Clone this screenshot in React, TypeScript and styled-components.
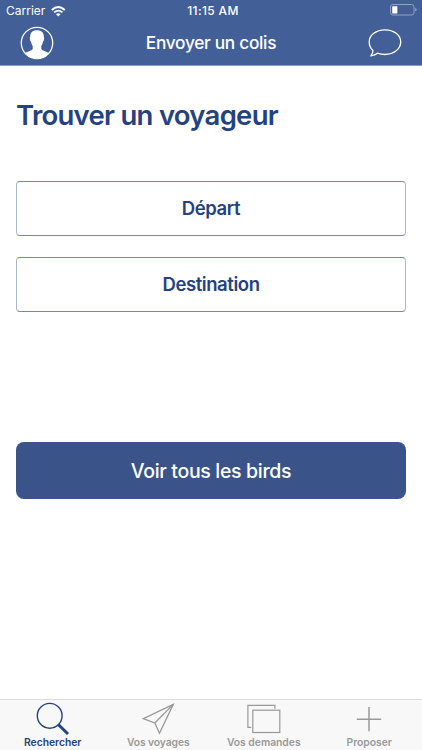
import React from "react";
import styled, { createGlobalStyle } from "styled-components";

const GlobalStyle = createGlobalStyle`
  * { box-sizing: border-box; }
  body { margin: 0; background: #fff; font-family: Inter, "Liberation Sans", sans-serif; }
  button { font: inherit; cursor: pointer; padding: 0; margin: 0; }
  svg { display: block; flex: none; }
`;

const Screen = styled.div`
  width: 422px;
  height: 750px;
  display: flex;
  flex-direction: column;
  background: #fff;
`;

const Header = styled.header`
  height: 66px;
  flex: none;
  background: #425f97;
  border-bottom: 1px solid #8b9ab9;
  color: #fff;
`;

const StatusBar = styled.div`
  height: 22px;
  display: grid;
  grid-template-columns: 1fr auto 1fr;
  align-items: center;
  padding: 0 5px 0 6px;
`;

const Carrier = styled.div`
  display: flex;
  align-items: center;
  gap: 6px;
  font-size: 12px;
  line-height: 22px;
`;

const Clock = styled.div`
  font-size: 12px;
  line-height: 21px;
  padding-bottom: 1px;
  font-weight: 500;
  letter-spacing: 0.35px;
  padding-left: 3px;
`;

const BatterySlot = styled.div`
  justify-self: end;
  padding-bottom: 2px;
`;

const NavBar = styled.div`
  height: 42px;
  display: grid;
  grid-template-columns: 1fr auto 1fr;
  align-items: center;
  padding: 0 20px;
`;

const IconButton = styled.button<{ $end?: boolean }>`
  border: 0;
  background: none;
  color: inherit;
  justify-self: ${(p) => (p.$end ? "end" : "start")};
`;

const NavTitle = styled.h1`
  margin: 0;
  font-size: 17.3px;
  line-height: 42px;
  font-weight: 500;
  letter-spacing: -0.3px;
`;

const Main = styled.main`
  flex: 1;
  display: flex;
  flex-direction: column;
  padding: 32px 16px 0;
`;

const Heading = styled.h2`
  margin: 0 0 49px;
  color: #24427f;
  font-size: 27.5px;
  line-height: 34px;
  font-weight: 600;
  letter-spacing: -0.72px;
  white-space: nowrap;
`;

const Fields = styled.div`
  display: flex;
  flex-direction: column;
  gap: 21px;
`;

const FieldButton = styled.button`
  height: 55px;
  padding-bottom: 2px;
  border: 1px solid #7488b3;
  border-left-color: #a9b7d2;
  border-right-color: #a9b7d2;
  border-radius: 4px;
  background: #fff;
  color: #24427f;
  font-size: 18.5px;
  font-weight: 600;
  letter-spacing: -0.42px;
`;

const PrimaryButton = styled.button`
  margin-top: 130px;
  height: 57px;
  border: 0;
  border-radius: 8px;
  background: #3a548a;
  color: #fff;
  font-size: 19.5px;
  font-weight: 500;
  letter-spacing: -0.33px;
`;

const TabBar = styled.nav`
  height: 51px;
  flex: none;
  display: grid;
  grid-template-columns: repeat(4, 1fr);
  border-top: 1px solid #dcdcde;
  background: #f8f8f8;
`;

const Tab = styled.button<{ $active?: boolean }>`
  border: 0;
  background: none;
  display: flex;
  flex-direction: column;
  align-items: center;
  color: ${(p) => (p.$active ? "#24427f" : "#999")};
`;

const TabLabel = styled.span<{ $spacing?: number }>`
  font-size: 10.3px;
  line-height: 11px;
  font-weight: 600;
  letter-spacing: ${(p) => p.$spacing ?? 0}px;
  white-space: nowrap;
`;

const WifiIcon = () => (
  <svg width="15" height="11" viewBox="0 0 15 11" fill="none" stroke="currentColor">
    <path d="M.8 4Q7.3-1.8 13.8 4" strokeWidth="1.9" />
    <path d="M3.1 6.4Q7.3 2.8 11.5 6.4" strokeWidth="1.8" />
    <path d="M5 8.2Q7.3 6.3 9.6 8.2L7.3 10.5Z" fill="currentColor" stroke="none" />
  </svg>
);

const BatteryIcon = () => (
  <svg width="27" height="12" viewBox="0 0 27 12" fill="none">
    <rect x=".5" y=".5" width="23.5" height="10.5" rx="2.4" stroke="#91a2c3" />
    <rect x="2.2" y="2.2" width="5.2" height="7.2" rx=".6" fill="#fff" />
    <path d="M25.2 4Q26.8 4.5 26.8 5.8T25.2 7.6Z" fill="#91a2c3" />
  </svg>
);

const ProfileIcon = () => (
  <svg width="34" height="34" viewBox="0 0 34 34" fill="none">
    <circle cx="17" cy="17" r="15.7" stroke="#fff" strokeWidth="1.3" />
    <path d="M17 4.3C12.4 4.3 10 7 10.2 11C9.5 11.4 9.9 15 11 15.6C11.4 17.9 12 19.2 12.7 20V23C11.6 25 8.1 25.3 5 27.1C8 31 12 32.7 17 32.7S26 31 29 27.1C25.9 25.3 22.4 25 21.3 23V20C22 19.2 22.6 17.9 23 15.6C24.1 15 24.5 11.4 23.8 11C24 7 21.6 4.3 17 4.3Z" fill="#fff" />
  </svg>
);

const ChatIcon = () => (
  <svg width="34" height="29" viewBox="0 0 34 29" fill="none" stroke="currentColor" strokeWidth="1.3" strokeLinejoin="round">
    <path d="M17 .8C8.1 .8 1.2 6.2 1.2 12.9C1.2 16.4 2.7 19.4 5 21.5C5 23.6 4 25.5 2.8 26.9C5.4 26.5 7.9 25.6 9.4 24.2C11.7 25.1 14.2 25.5 17 25.5C25.8 25.5 32.7 19.9 32.7 13S25.8 .8 17 .8Z" />
  </svg>
);

const SearchIcon = () => (
  <svg width="34" height="37" viewBox="0 0 34 37" fill="none" stroke="currentColor">
    <circle cx="13.7" cy="15.8" r="12.4" strokeWidth="1.4" />
    <path d="M22.3 24.5L32 34" strokeWidth="3" />
  </svg>
);

const PlaneIcon = () => (
  <svg width="34" height="37" viewBox="0 0 34 37" fill="none" stroke="currentColor" strokeWidth="1.3">
    <path d="M32.3 4.4L2.3 18.7L13.8 23L18.5 33.2Z" />
    <path d="M13.8 23L32.3 4.4" />
  </svg>
);

const StackIcon = () => (
  <svg width="34" height="37" viewBox="0 0 34 37" fill="none" stroke="currentColor" strokeWidth="1.2">
    <path d="M27.9 8.7V5.4H.9V27.4H4.2" />
    <rect x="5.8" y="10.2" width="27" height="22.3" />
  </svg>
);

const PlusIcon = () => (
  <svg width="34" height="37" viewBox="0 0 34 37" stroke="currentColor" strokeWidth="1.5">
    <path d="M4.8 19.2H29.2M17 7V31.2" />
  </svg>
);

const tabs = [
  { label: "Rechercher", Icon: SearchIcon, active: true, spacing: 0 },
  { label: "Vos voyages", Icon: PlaneIcon, spacing: -0.08 },
  { label: "Vos demandes", Icon: StackIcon, spacing: 0 },
  { label: "Proposer", Icon: PlusIcon, spacing: 0 },
];

export default function App() {
  return (
    <Screen>
      <GlobalStyle />
      <Header>
        <StatusBar>
          <Carrier>Carrier <WifiIcon /></Carrier>
          <Clock>11:15 AM</Clock>
          <BatterySlot><BatteryIcon /></BatterySlot>
        </StatusBar>
        <NavBar>
          <IconButton aria-label="Profil"><ProfileIcon /></IconButton>
          <NavTitle>Envoyer un colis</NavTitle>
          <IconButton $end aria-label="Messages"><ChatIcon /></IconButton>
        </NavBar>
      </Header>
      <Main>
        <Heading>Trouver un voyageur</Heading>
        <Fields>
          <FieldButton>Départ</FieldButton>
          <FieldButton>Destination</FieldButton>
        </Fields>
        <PrimaryButton>Voir tous les birds</PrimaryButton>
      </Main>
      <TabBar>
        {tabs.map(({ label, Icon, active, spacing }) => (
          <Tab key={label} $active={active}>
            <Icon />
            <TabLabel $spacing={spacing}>{label}</TabLabel>
          </Tab>
        ))}
      </TabBar>
    </Screen>
  );
}
